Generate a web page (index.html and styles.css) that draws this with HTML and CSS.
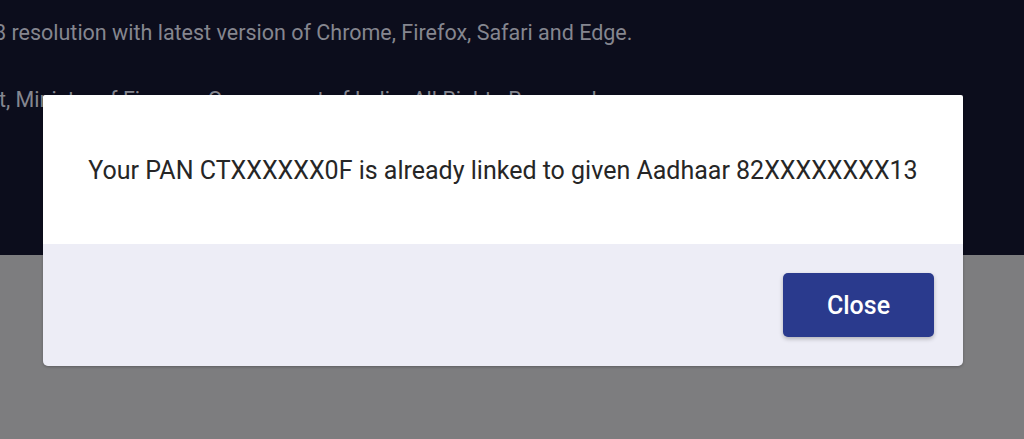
FILE: index.html
```html
<!DOCTYPE html>
<html>
<head>
<meta charset="utf-8">
<link rel="stylesheet" href="styles.css">
</head>
<body>
<div class="page">
  <div class="site-footer">
    <p class="foot-line first">8 resolution with latest version of Chrome, Firefox, Safari and Edge.</p>
    <p class="foot-line second">t, Ministry of Finance, Government of India. All Rights Reserved.</p>
  </div>
  <div class="below"></div>
</div>
<div class="dialog">
  <div class="dialog-body">
    <p class="message">Your PAN CTXXXXXX0F is already linked to given Aadhaar 82XXXXXXXX13</p>
  </div>
  <div class="dialog-footer">
    <button class="close-btn">Close</button>
  </div>
</div>
</body>
</html>
```
FILE: styles.css
```css
html, body {
  margin: 0;
  padding: 0;
  width: 1024px;
  height: 439px;
  overflow: hidden;
  font-family: Roboto, "Liberation Sans", sans-serif;
}
.page {
  display: flex;
  flex-direction: column;
  height: 439px;
}
.site-footer {
  height: 255px;
  background: #0c0d1c;
  overflow: hidden;
  display: flex;
  flex-direction: column;
}
.below {
  flex: 1;
  background: #7d7d7f;
}
.foot-line {
  margin: 0;
  color: #85868f;
  font-size: 21.5px;
  line-height: 26px;
  white-space: nowrap;
}
.first {
  margin-top: 20px;
  margin-left: -6px;
}
.second {
  margin-top: 41px;
  margin-left: -1px;
}
.dialog {
  position: absolute;
  left: 43px;
  top: 95px;
  width: 920px;
  height: 271px;
  display: flex;
  flex-direction: column;
  border-radius: 2px 2px 5px 5px;
  overflow: hidden;
  box-shadow: 0 1px 3px rgba(0,0,0,0.25);
}
.dialog-body {
  height: 149px;
  background: #ffffff;
  display: flex;
  align-items: center;
  justify-content: center;
}
.message {
  margin: 0;
  font-size: 25px;
  color: #262626;
  padding-top: 1px;
  white-space: nowrap;
}
.dialog-footer {
  flex: 1;
  background: #ededf6;
  display: flex;
  justify-content: flex-end;
  align-items: center;
  padding-right: 29px;
}
.close-btn {
  width: 151px;
  height: 64px;
  background: #2a3a8d;
  color: #ffffff;
  border: none;
  border-radius: 5px;
  font-family: Roboto, "Liberation Sans", sans-serif;
  font-weight: 500;
  font-size: 25px;
  padding: 0;
  box-shadow: 0 2px 4px rgba(0,0,0,0.25);
}
```
